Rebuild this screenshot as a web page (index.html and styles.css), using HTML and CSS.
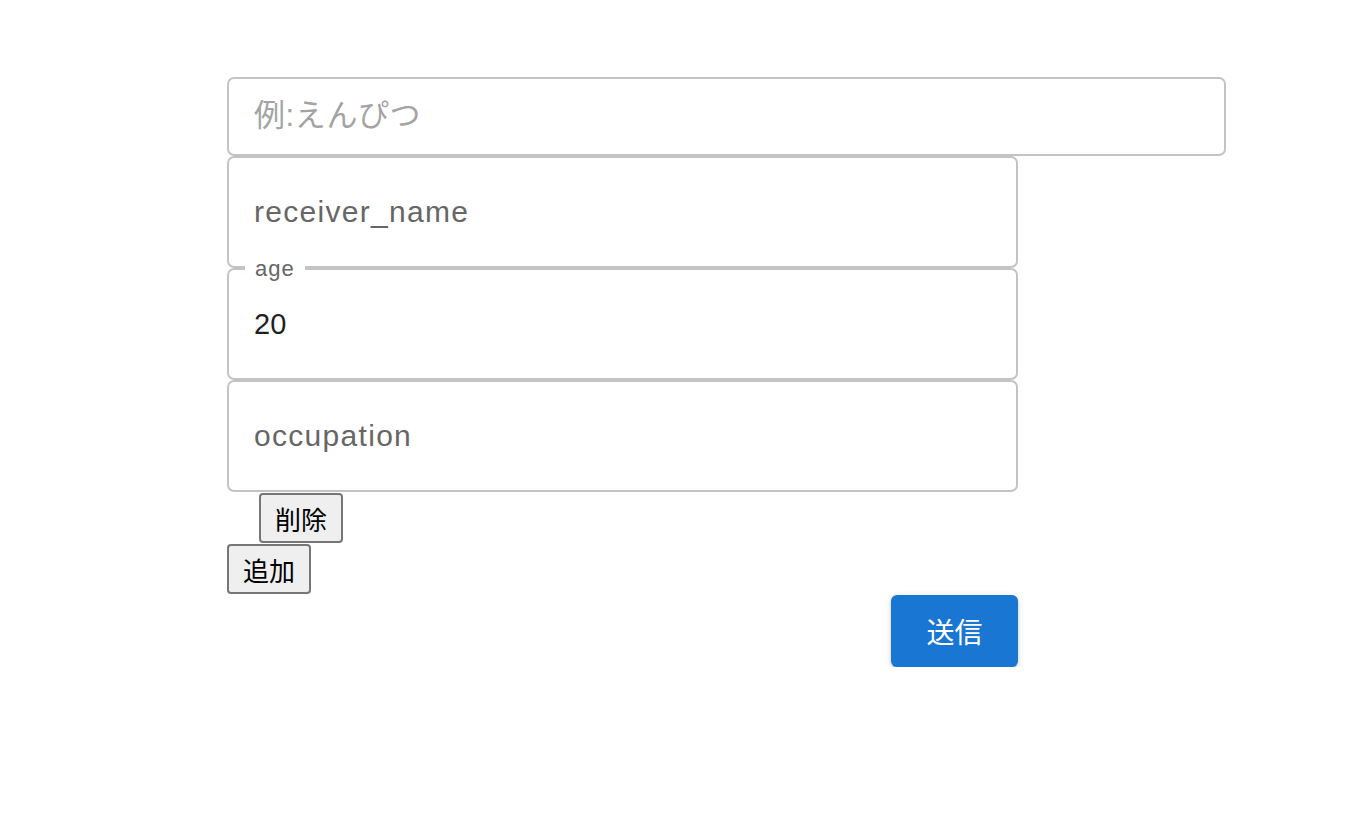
FILE: index.html
```html
<!DOCTYPE html>
<html lang="ja">
<head>
<meta charset="utf-8">
<link rel="stylesheet" href="styles.css">
</head>
<body>
<form class="form">
  <div class="field field-wide">
    <input class="input" type="text" placeholder="例:えんぴつ">
  </div>
  <div class="group">
    <div class="field field-tall">
      <input class="input" type="text" placeholder="receiver_name">
    </div>
    <div class="field field-tall">
      <span class="legend">age</span>
      <input class="input value" type="text" value="20">
    </div>
    <div class="field field-tall">
      <input class="input" type="text" placeholder="occupation">
    </div>
    <div class="row-delete">
      <button type="button" class="native-btn">削除</button>
    </div>
  </div>
  <div class="row-add">
    <button type="button" class="native-btn">追加</button>
  </div>
  <div class="row-submit">
    <button type="button" class="submit-btn">送信</button>
  </div>
</form>
</body>
</html>
```
FILE: styles.css
```css
html, body {
  margin: 0;
  padding: 0;
  background: #fff;
}
body {
  font-family: "Liberation Sans", "Noto Sans CJK JP", sans-serif;
}
.form {
  margin-left: 227px;
  padding-top: 77px;
  display: flex;
  flex-direction: column;
  width: 999px;
}
.group {
  display: flex;
  flex-direction: column;
}
.field {
  position: relative;
  box-sizing: border-box;
  border: 2px solid #c4c4c4;
  border-radius: 7px;
  display: flex;
  align-items: center;
  padding-left: 25px;
}
.field-wide {
  width: 999px;
  height: 79px;
}
.field-tall {
  width: 791px;
  height: 112px;
}
.input {
  border: none;
  outline: none;
  background: transparent;
  padding: 0;
  width: 100%;
  font-family: "Liberation Sans", "Noto Sans CJK JP", sans-serif;
  font-size: 29px;
  color: #1f1f1f;
}
.input::placeholder {
  color: #666;
  opacity: 1;
  font-size: 30px;
  letter-spacing: 1.3px;
}
.field-wide .input::placeholder {
  color: #a3a3a3;
  font-size: 31px;
  letter-spacing: 0.6px;
}
.legend {
  position: absolute;
  top: -13px;
  left: 16px;
  padding: 0 10px;
  background: #fff;
  font-size: 22px;
  line-height: 24px;
  letter-spacing: 1px;
  color: #666;
}
.row-delete {
  padding-left: 32px;
  margin-top: 1px;
}
.native-btn {
  box-sizing: border-box;
  height: 50px;
  padding: 0 14px;
  border: 2px solid #767676;
  border-radius: 4px;
  background: #efefef;
  font-family: "Liberation Sans", "Noto Sans CJK JP", sans-serif;
  font-size: 26px;
  color: #000;
}
.row-add {
  margin-top: 1px;
}
.row-submit {
  width: 791px;
  display: flex;
  justify-content: flex-end;
  margin-top: 1px;
}
.submit-btn {
  box-sizing: border-box;
  width: 127px;
  height: 72px;
  border: none;
  border-radius: 6px;
  background: #1976d2;
  color: #fff;
  font-family: "Liberation Sans", "Noto Sans CJK JP", sans-serif;
  font-size: 28px;
  box-shadow: 0 3px 1px -2px rgba(0,0,0,0.2), 0 2px 3px 0 rgba(0,0,0,0.14), 0 1px 7px 0 rgba(0,0,0,0.12);
}
```
